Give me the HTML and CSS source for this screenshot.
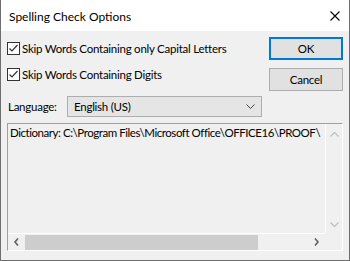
FILE: index.html
```html
<!DOCTYPE html>
<html>
<head>
<meta charset="utf-8">
<link rel="stylesheet" href="styles.css">
</head>
<body>
<div class="window">
  <div class="titlebar">
    <span class="title">Spelling Check Options</span>
    <svg class="close" width="10" height="10" viewBox="0 0 10 10"><path d="M0.5 0.5 L9.5 9.5 M9.5 0.5 L0.5 9.5" stroke="#000" stroke-width="1.1" fill="none"/></svg>
  </div>
  <div class="body">
    <div class="top">
      <div class="checks">
        <label class="check">
          <span class="box"><svg width="11" height="11" viewBox="0 0 11 11"><path d="M1.5 5.5 L4 8 L9.5 2" stroke="#333" stroke-width="1.2" fill="none"/></svg></span>
          <span>Skip Words Containing only Capital Letters</span>
        </label>
        <label class="check">
          <span class="box"><svg width="11" height="11" viewBox="0 0 11 11"><path d="M1.5 5.5 L4 8 L9.5 2" stroke="#333" stroke-width="1.2" fill="none"/></svg></span>
          <span>Skip Words Containing Digits</span>
        </label>
      </div>
      <div class="buttons">
        <div class="btn default">OK</div>
        <div class="btn">Cancel</div>
      </div>
    </div>
    <div class="langrow">
      <span class="label">Language:</span>
      <div class="select">
        <span>English (US)</span>
        <svg width="9" height="5" viewBox="0 0 9 5"><path d="M0.5 0.5 L4.5 4.5 L8.5 0.5" stroke="#444" stroke-width="1" fill="none"/></svg>
      </div>
    </div>
    <div class="listbox">
      <div class="content">Dictionary: C:\Program Files\Microsoft Office\OFFICE16\PROOF\</div>
      <div class="vscroll">
        <svg width="9" height="5" viewBox="0 0 9 5"><path d="M0.5 4.5 L4.5 0.5 L8.5 4.5" stroke="#c0c0c0" stroke-width="1.3" fill="none"/></svg>
        <svg width="9" height="5" viewBox="0 0 9 5"><path d="M0.5 0.5 L4.5 4.5 L8.5 0.5" stroke="#c0c0c0" stroke-width="1.3" fill="none"/></svg>
      </div>
      <div class="hscroll">
        <div class="arrow"><svg width="5" height="8" viewBox="0 0 5 8"><path d="M4 0.5 L1 4 L4 7.5" stroke="#606060" stroke-width="1.6" fill="none"/></svg></div>
        <div class="track"><div class="thumb"></div></div>
        <div class="arrow"><svg width="5" height="8" viewBox="0 0 5 8"><path d="M1 0.5 L4 4 L1 7.5" stroke="#606060" stroke-width="1.6" fill="none"/></svg></div>
      </div>
      <div class="corner"></div>
    </div>
  </div>
</div>
</body>
</html>
```
FILE: styles.css
```css
* { box-sizing: border-box; }
html, body { margin: 0; padding: 0; }
body { width: 350px; height: 261px; overflow: hidden; font-family: Lato, "Liberation Sans", sans-serif; font-size: 11.5px; letter-spacing: -0.25px; color: #000; }
.window { width: 350px; height: 261px; border: 1px solid #6e6e6e; border-top: none; background: #f0f0f0; display: flex; flex-direction: column; }
.titlebar { height: 31px; background: #fff; display: flex; align-items: center; justify-content: space-between; padding: 0 9px 0 8px; }
.title { font-size: 12px; letter-spacing: 0; padding-top: 1px; }
.close { margin-top: 0; }
.body { flex: 1; padding: 0 6px 9px 6px; display: flex; flex-direction: column; }
.top { display: flex; justify-content: space-between; height: 60px; }
.checks { padding-top: 9px; display: flex; flex-direction: column; gap: 10px; }
.check { display: flex; align-items: center; height: 16px; gap: 2px; }
.box { width: 13px; height: 13px; border: 1px solid #333; background: #fff; display: flex; align-items: center; justify-content: center; }
.buttons { padding-top: 6px; display: flex; flex-direction: column; gap: 8px; }
.btn { width: 74px; height: 23px; border: 1px solid #adadad; background: #e1e1e1; display: flex; align-items: center; justify-content: center; }
.btn.default { border: 2px solid #0078d7; }
.langrow { margin-top: 5px; display: flex; align-items: center; height: 21px; }
.label { width: 60px; padding-left: 1px; }
.select { width: 195px; height: 21px; border: 1px solid #adadad; background: #e5e5e5; display: flex; align-items: center; justify-content: space-between; padding: 0 6px 0 6px; }
.listbox { margin-top: 6px; flex: 1; border-top: 1px solid #a0a0a0; border-left: 1px solid #a0a0a0; border-right: 1px solid #fff; border-bottom: 1px solid #fff; display: grid; grid-template-columns: 1fr 17px; grid-template-rows: 1fr 17px; }
.content { padding: 2px 2px; white-space: nowrap; overflow: hidden; height: 100%; letter-spacing: -0.45px; }
.vscroll { border-left: 1px solid #fff; display: flex; flex-direction: column; justify-content: space-between; align-items: center; padding: 8px 0 6px 0; }
.hscroll { border-top: 1px solid #fff; display: flex; }
.arrow { width: 17px; display: flex; align-items: center; justify-content: center; }
.track { flex: 1; padding-top: 1px; }
.thumb { width: 233px; height: 15px; background: #cdcdcd; }
.corner { background: #f0f0f0; }
```
